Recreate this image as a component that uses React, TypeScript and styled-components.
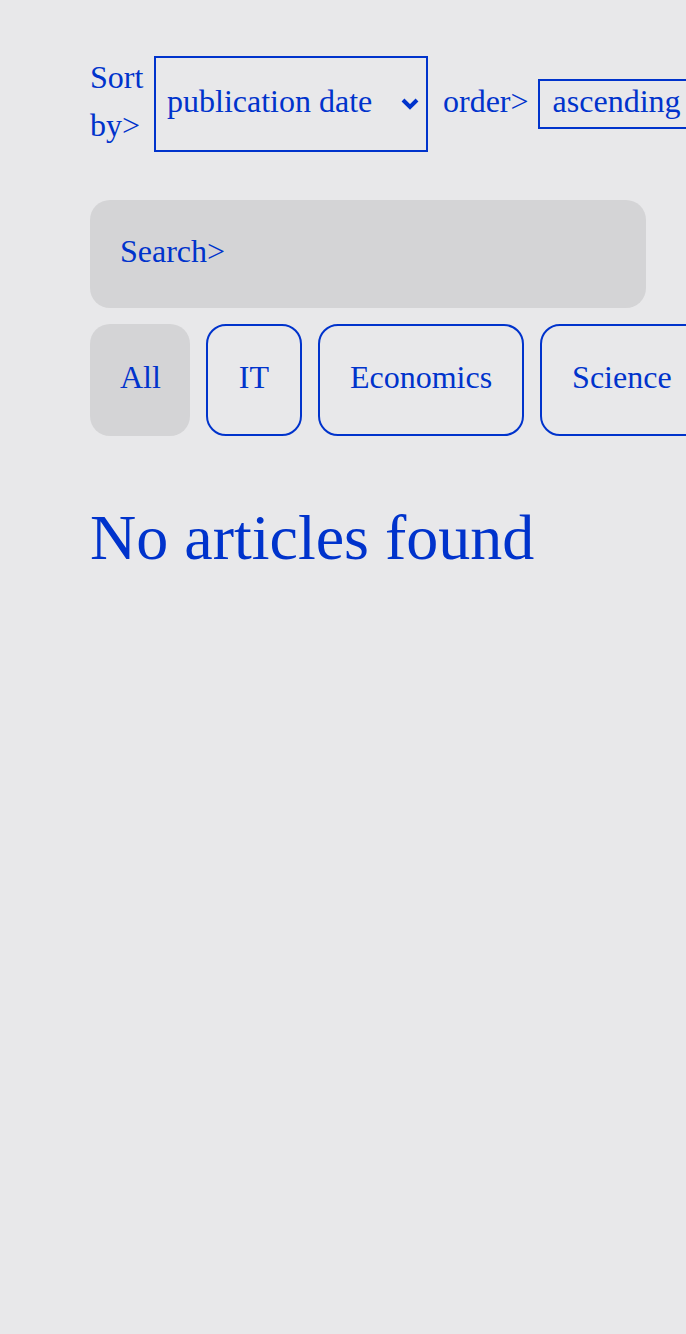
import React, { useState } from 'react';
import styled, { createGlobalStyle } from 'styled-components';

const blue = '#0033cc';
const grey = '#d4d4d6';

const GlobalStyle = createGlobalStyle`
  html, body {
    margin: 0;
    background: #e8e8ea;
  }
  body {
    font-family: "Liberation Serif", "Times New Roman", serif;
    color: ${blue};
    overflow: hidden;
  }
`;

const Page = styled.main`
  min-height: 1334px;
  padding: 56px 0 0 90px;
  box-sizing: border-box;
`;

const SortRow = styled.div`
  display: flex;
  align-items: center;
  gap: 11px;
  width: 700px;
`;

const Label = styled.label<{ narrow?: boolean }>`
  font-size: 32px;
  line-height: 48px;
  width: ${p => (p.narrow ? '53px' : 'auto')};
  flex-shrink: 0;
  margin-top: -6px;
  margin-right: ${p => (p.narrow ? '0' : '-2px')};
`;

const SelectWrap = styled.div`
  position: relative;
  flex-shrink: 0;
  margin-right: 4px;
`;

const Select = styled.select<{ tall?: boolean }>`
  appearance: none;
  -webkit-appearance: none;
  box-sizing: border-box;
  font-family: inherit;
  font-size: 32px;
  line-height: 40px;
  color: ${blue};
  background: transparent;
  border: 2px solid ${blue};
  border-radius: 0;
  outline: none;
  height: ${p => (p.tall ? '96px' : '50px')};
  width: ${p => (p.tall ? '274px' : '160px')};
  padding: 0 ${p => (p.tall ? '40px' : '10px')} 6px ${p => (p.tall ? '11px' : '13px')};
`;

const Chevron = styled.svg`
  position: absolute;
  right: 9px;
  top: 42px;
  width: 18px;
  height: 12px;
  pointer-events: none;
`;

const SearchBox = styled.input`
  display: block;
  box-sizing: border-box;
  margin-top: 48px;
  width: 556px;
  height: 108px;
  padding: 27px 30px 33px;
  border: none;
  border-radius: 20px;
  background: ${grey};
  font-family: inherit;
  font-size: 32px;
  line-height: 48px;
  color: ${blue};
  outline: none;

  &::placeholder {
    color: ${blue};
    opacity: 1;
  }
`;

const Categories = styled.div`
  display: flex;
  gap: 16px;
  margin-top: 16px;
  width: 800px;
`;

const CategoryButton = styled.button<{ active: boolean }>`
  flex-shrink: 0;
  min-width: 96px;
  font-family: inherit;
  font-size: 32px;
  line-height: 48px;
  color: ${blue};
  border-radius: 20px;
  background: ${p => (p.active ? grey : 'transparent')};
  border: ${p => (p.active ? 'none' : `2px solid ${blue}`)};
  padding: ${p => (p.active ? '29px 29px 35px 30px' : '27px 30px 33px')};
  cursor: pointer;
`;

const Empty = styled.h1`
  margin: 62px 0 0;
  font-weight: normal;
  font-size: 64px;
  line-height: 80px;
`;

const categories = ['All', 'IT', 'Economics', 'Science', 'Art'];

export default function App() {
  const [active, setActive] = useState('All');

  return (
    <Page>
      <GlobalStyle />
      <SortRow>
        <Label narrow>Sort by&gt;</Label>
        <SelectWrap>
          <Select tall defaultValue="date">
            <option value="date">publication date</option>
            <option value="title">title</option>
          </Select>
          <Chevron viewBox="0 0 18 12">
            <path d="M2 2 L9 9 L16 2" fill="none" stroke={blue} strokeWidth="4" strokeLinecap="butt" strokeLinejoin="miter" />
          </Chevron>
        </SelectWrap>
        <Label>order&gt;</Label>
        <Select defaultValue="asc">
          <option value="asc">ascending</option>
          <option value="desc">descending</option>
        </Select>
      </SortRow>

      <SearchBox placeholder="Search>" />

      <Categories>
        {categories.map(c => (
          <CategoryButton key={c} active={active === c} onClick={() => setActive(c)}>
            {c}
          </CategoryButton>
        ))}
      </Categories>

      <Empty>No articles found</Empty>
    </Page>
  );
}
